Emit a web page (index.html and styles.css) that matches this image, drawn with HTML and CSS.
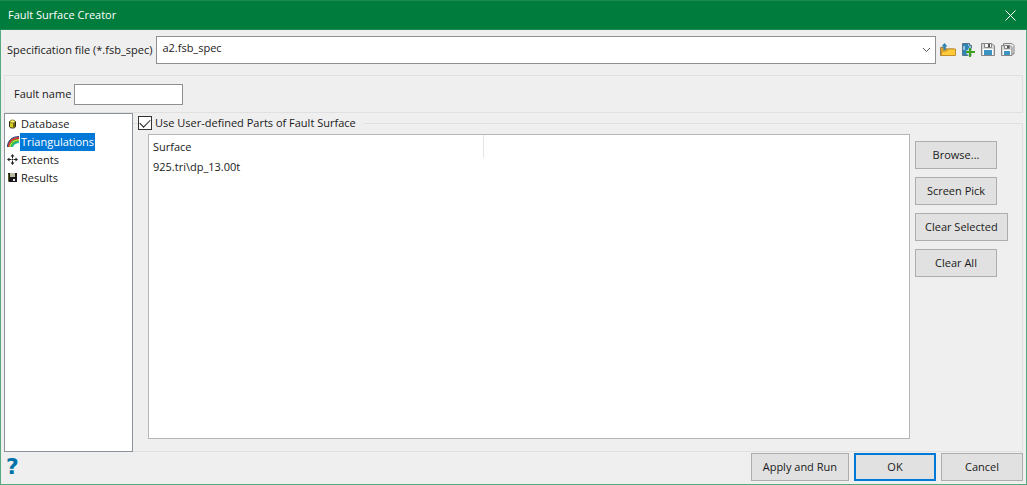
FILE: index.html
```html
<!DOCTYPE html>
<html lang="en">
<head>
  <meta charset="UTF-8">
  <title>Fault Surface Creator</title>
  <link rel="stylesheet" href="styles.css">
</head>
<body>

<form class="window">

  <header class="titlebar">
    <h1>Fault Surface Creator</h1>
    <button type="button" class="close" aria-label="Close">
      <svg width="11" height="11" viewBox="0 0 11 11"><path d="M.5.5l10 10M10.5.5l-10 10" stroke="#fff" fill="none"/></svg>
    </button>
  </header>

  <div class="spec">
    <label for="spec-file">Specification file (*.fsb_spec)</label>
    <div class="combo">
      <select id="spec-file">
        <option>a2.fsb_spec</option>
      </select>
      <svg class="combo-arrow" width="9" height="6" viewBox="0 0 9 6"><path d="M1 1l3.500 3.500L8 1" stroke="#555" fill="none"/></svg>
    </div>
    <div class="tools">
      <button type="button" aria-label="Open">
        <svg width="16" height="16" viewBox="0 0 16 16">
          <path d="M.5 13.500V5.500h5l1 1.500h7.500v6.500z" fill="#e0a52c" stroke="#9a8050"/>
          <path d="M1 13.500l1-4.500h4.500L8 7h7.500v6.500z" fill="#ffc937" stroke="#c08e2c"/>
          <path d="M3.500 8V4.500H1.500L4.500 1l3 3.500H5.500V8z" fill="#2b83b5"/>
        </svg>
      </button>
      <button type="button" aria-label="New">
        <svg width="16" height="16" viewBox="0 0 16 16">
          <path d="M2.500 1.500h7l2 2v10h-9z" fill="#8fc3e0" stroke="#56758a"/>
          <path d="M3 2h5v2H3zM5 4h4v4H5zM3 8h4v5H3z" fill="#2f86b5"/>
          <path d="M9.500 1.500v2h2" fill="#fff" stroke="#56758a"/>
          <path d="M10 6v9M6 10h9" stroke="#efefef" stroke-width="3"/>
          <path d="M10 6v9M6 10h9" stroke="#3da21c" stroke-width="2"/>
        </svg>
      </button>
      <button type="button" aria-label="Save">
        <svg width="16" height="16" viewBox="0 0 16 16">
          <path d="M1.500 1.500h10.500l2.500 2.500v9.500h-13z" fill="#d6d6d6" stroke="#858585"/>
          <path d="M4.500 1.500h7v4h-7z" fill="#f4f4f4" stroke="#858585"/>
          <path d="M8 2h2v3H8z" fill="#555"/>
          <path d="M3 7h10v6H3z" fill="#fff"/>
          <path d="M4 8h8v5H4z" fill="#3c94c4"/>
        </svg>
      </button>
      <button type="button" aria-label="Save as">
        <svg width="16" height="16" viewBox="0 0 16 16">
          <path d="M3.500 1.500h8.500l2 2v8.500h-10.500z" fill="#e8e8e8" stroke="#858585"/>
          <path d="M1.500 3.500h8.500l2 2v8h-10.500z" fill="#d6d6d6" stroke="#858585"/>
          <path d="M4.500 3.500h5v3h-5z" fill="#f4f4f4" stroke="#858585"/>
          <path d="M7 4h2v2H7z" fill="#555"/>
          <path d="M3 8h8v5H3z" fill="#fff"/>
          <path d="M4 9h6v4H4z" fill="#3c94c4"/>
        </svg>
      </button>
    </div>
  </div>

  <div class="fault">
    <label for="fault-name">Fault name</label>
    <input type="text" id="fault-name">
  </div>

  <main class="content">
    <nav class="tree">
      <a href="#database">
        <svg width="12" height="12" viewBox="0 0 12 12">
          <path d="M2.500 3.500v5c0 2 6 2 6 0v-5z" fill="#d8cc20" stroke="#222"/>
          <path d="M6 5h2v4H6z" fill="#6d6510"/>
          <ellipse cx="5.500" cy="3.500" rx="2.500" ry="1.500" fill="#fff87a" stroke="#85801c"/>
        </svg>
        <span>Database</span>
      </a>
      <a href="#triangulations" class="is-selected">
        <svg width="12" height="12" viewBox="0 0 12 12">
          <path d="M.5 11C.5 4.500 5 1 11.500 1L12 7C9 7 7 8 6 11z" fill="#35c048"/>
          <path d="M1.500 11C1.500 5.500 5.500 2 12 2" stroke="#e03030" stroke-width="2" fill="none"/>
          <path d="M3 11C3.500 6.500 7 4 12 4" stroke="#f4e030" fill="none"/>
          <path d="M5.500 11c.5-3 3-4.500 6.500-4.500" stroke="#24b0d0" fill="none"/>
          <path d="M.5 11C.5 4.500 5 .5 12 .5" stroke="#24408a" fill="none"/>
        </svg>
        <span>Triangulations</span>
      </a>
      <a href="#extents">
        <svg width="12" height="12" viewBox="0 0 12 12">
          <path d="M5.500 1v3M5.500 7v3M1 5.500h3M7 5.500h3M4.500 5.500h2M5.500 4.500v2" stroke="#222"/>
          <path d="M5.500 0l2 2.500h-4zM5.500 11l2-2.500h-4zM0 5.500l2.500-2v4zM11 5.500l-2.500-2v4z" fill="#222"/>
        </svg>
        <span>Extents</span>
      </a>
      <a href="#results">
        <svg width="12" height="12" viewBox="0 0 12 12">
          <path d="M1 1h9v9H2l-1-1z" fill="#191919"/>
          <path d="M3 1h5v4H3z" fill="#b9bca0"/>
          <path d="M1.500 2v7" stroke="#57551c"/>
          <path d="M6 7h2v2H6z" fill="#eee"/>
        </svg>
        <span>Results</span>
      </a>
    </nav>

    <fieldset class="parts">
      <legend>
        <input type="checkbox" id="user-parts" checked>
        <label for="user-parts">Use User-defined Parts of Fault Surface</label>
      </legend>
      <div class="list">
        <table>
          <thead>
            <tr><th>Surface</th><td></td></tr>
          </thead>
          <tbody>
            <tr><td>925.tri\dp_13.00t</td><td></td></tr>
          </tbody>
        </table>
      </div>
      <div class="actions">
        <button type="button" class="button">Browse...</button>
        <button type="button" class="button">Screen Pick</button>
        <button type="button" class="button">Clear Selected</button>
        <button type="button" class="button">Clear All</button>
      </div>
    </fieldset>
  </main>

  <footer class="footer">
    <button type="button" class="help" aria-label="Help">?</button>
    <button type="button" class="button">Apply and Run</button>
    <button type="submit" class="button is-default">OK</button>
    <button type="button" class="button">Cancel</button>
  </footer>

</form>

</body>
</html>
```

FILE: styles.css
```css
* {
  box-sizing: border-box;
}
body {
  margin: 0;
}
body, button, input, select {
  font-family: "Open Sans", "Noto Sans", sans-serif;
  font-size: 11px;
  line-height: 18px;
  color: #1a1a1a;
}
button {
  padding: 0;
  border: 0;
  background: none;
}
svg {
  display: block;
  flex: none;
}

.window {
  display: flex;
  flex-direction: column;
  min-height: 100vh;
  border: 1px solid #57aa80;
  border-top: 0;
  background: #efefef;
}

.titlebar {
  display: flex;
  align-items: center;
  justify-content: space-between;
  height: 30px;
  margin: 0 -1px;
  padding: 0 11px 0 8px;
  border: 1px solid #1a8a50;
  border-width: 1px 0;
  background: #007d3c;
}
.titlebar h1 {
  margin: 0;
  font-size: 11px;
  font-weight: 400;
  color: #fff;
}

.spec {
  display: flex;
  align-items: center;
  gap: 4px;
  padding: 6px 10px 0 6px;
}
.combo {
  position: relative;
  flex: 1;
}
.combo select {
  display: block;
  width: 100%;
  height: 28px;
  padding: 0 24px 5px 5px;
  appearance: none;
  border: 1px solid #8f8f8f;
  border-radius: 0;
  background: #fff;
}
.combo-arrow {
  position: absolute;
  top: 11px;
  right: 5px;
  pointer-events: none;
}
.tools {
  display: flex;
  gap: 4px;
}

.fault {
  display: flex;
  align-items: center;
  gap: 3px;
  height: 38px;
  margin: 11px 3px 0;
  padding: 0 9px;
  border: 1px solid #e0e0e0;
}
.fault input {
  width: 109px;
  height: 21px;
  border: 1px solid #8f8f8f;
  background: #fff;
}

.content {
  display: flex;
  flex: 1;
  margin: 0 3px;
}
.tree {
  width: 129px;
  padding: 1px 2px;
  border: 1px solid #8c929c;
  background: #fff;
}
.tree a {
  display: flex;
  align-items: center;
  gap: 1px;
  color: inherit;
  text-decoration: none;
}
.tree span {
  padding: 0 1px;
}
.tree .is-selected span {
  background: #0078d7;
  color: #fff;
}

.parts {
  display: flex;
  flex: 1;
  gap: 5px;
  min-width: 0;
  margin: 0;
  padding: 1px 13px 12px 15px;
  border: 1px solid #e0e0e0;
  border-left: 0;
}
.parts legend {
  display: flex;
  align-items: center;
  gap: 3px;
  height: 20px;
  margin-left: -10px;
  padding: 0 8px 0 0;
}
.parts legend input {
  display: grid;
  place-items: center;
  width: 14px;
  height: 14px;
  margin: 0;
  appearance: none;
  border: 1px solid #333;
  background: #fff;
}
.parts legend input:checked::before {
  content: "";
  width: 9px;
  height: 5px;
  margin-bottom: 3px;
  border: solid #222;
  border-width: 0 0 1px 1px;
  transform: rotate(-45deg);
}
.list {
  flex: 1;
  border: 1px solid #b4b6ba;
  background: #fff;
}
.list table {
  width: 100%;
  table-layout: fixed;
  border-collapse: collapse;
}
.list th, .list td {
  height: 18px;
  padding: 0 4px;
  font-weight: 400;
  text-align: left;
}
.list th {
  width: 334px;
  height: 23px;
  border-right: 1px solid #e5e5e5;
}

.actions {
  display: flex;
  flex-direction: column;
  align-items: flex-start;
  gap: 8px;
  width: 94px;
  padding-top: 7px;
}
.button {
  min-width: 82px;
  height: 28px;
  padding: 0 9px;
  border: 1px solid #adadad;
  background: #e1e1e1;
}
.button.is-default {
  border: 2px solid #0078d7;
}

.footer {
  display: flex;
  gap: 5px;
  padding: 1px 3px 3px;
}
.footer .button {
  padding: 0 11px;
}
.help {
  margin: 0 auto 0 2px;
  font-family: "DejaVu Sans", sans-serif;
  font-size: 22px;
  font-weight: 700;
  color: #0072aa;
}
```
